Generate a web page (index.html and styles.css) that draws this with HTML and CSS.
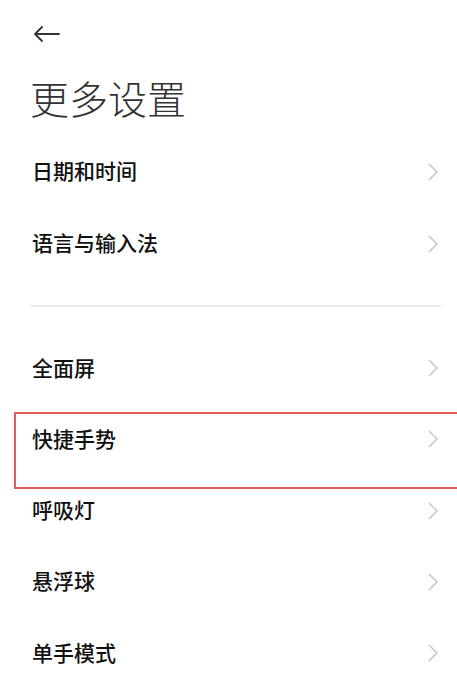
FILE: index.html
```html
<!DOCTYPE html>
<html lang="zh-CN">
<head>
<meta charset="utf-8">
<title>更多设置</title>
<link rel="stylesheet" href="styles.css">
</head>
<body>
<div class="page">
  <div class="topbar">
    <svg class="back" width="27" height="16" viewBox="0 0 27 16">
      <path d="M26 8H2M9 1L2 8l7 7" fill="none" stroke="#333" stroke-width="1.8" stroke-linecap="round" stroke-linejoin="round"/>
    </svg>
  </div>
  <h1 class="title">更多设置</h1>
  <div class="group">
    <div class="row"><span class="label">日期和时间</span><svg class="chev" width="10" height="18" viewBox="0 0 10 18"><polyline points="1,1 9,9 1,17" fill="none" stroke="#c2c2c2" stroke-width="1.4"/></svg></div>
    <div class="row"><span class="label">语言与输入法</span><svg class="chev" width="10" height="18" viewBox="0 0 10 18"><polyline points="1,1 9,9 1,17" fill="none" stroke="#c2c2c2" stroke-width="1.4"/></svg></div>
  </div>
  <div class="sep"><div class="line"></div></div>
  <div class="group group2">
    <div class="row r2"><span class="label">全面屏</span><svg class="chev" width="10" height="18" viewBox="0 0 10 18"><polyline points="1,1 9,9 1,17" fill="none" stroke="#c2c2c2" stroke-width="1.4"/></svg></div>
    <div class="row r2"><span class="label">快捷手势</span><svg class="chev" width="10" height="18" viewBox="0 0 10 18"><polyline points="1,1 9,9 1,17" fill="none" stroke="#c2c2c2" stroke-width="1.4"/></svg></div>
    <div class="row r2"><span class="label">呼吸灯</span><svg class="chev" width="10" height="18" viewBox="0 0 10 18"><polyline points="1,1 9,9 1,17" fill="none" stroke="#c2c2c2" stroke-width="1.4"/></svg></div>
    <div class="row r2"><span class="label">悬浮球</span><svg class="chev" width="10" height="18" viewBox="0 0 10 18"><polyline points="1,1 9,9 1,17" fill="none" stroke="#c2c2c2" stroke-width="1.4"/></svg></div>
    <div class="row r2"><span class="label">单手模式</span><svg class="chev" width="10" height="18" viewBox="0 0 10 18"><polyline points="1,1 9,9 1,17" fill="none" stroke="#c2c2c2" stroke-width="1.4"/></svg></div>
  </div>
  <div class="highlight"></div>
</div>
</body>
</html>
```
FILE: styles.css
```css
html, body {
  margin: 0;
  padding: 0;
  background: #fff;
}
body {
  font-family: "Noto Sans CJK SC", "Noto Sans", sans-serif;
  color: #111;
  width: 457px;
  height: 698px;
  overflow: hidden;
}
.page {
  position: relative;
  width: 457px;
  height: 698px;
}
.topbar {
  height: 68px;
  display: flex;
  align-items: center;
  padding-left: 33px;
}
.back {
  display: block;
}
.title {
  margin: 0;
  height: 68px;
  box-sizing: border-box;
  display: flex;
  align-items: center;
  padding-left: 30px;
  padding-bottom: 10px;
  font-size: 39px;
  font-weight: 300;
  color: #333;
  letter-spacing: 0;
}
.group {
  display: flex;
  flex-direction: column;
}
.row {
  height: 72px;
  box-sizing: border-box;
  display: flex;
  align-items: center;
  justify-content: space-between;
  padding-left: 32px;
  padding-right: 19px;
  padding-bottom: 3px;
}
.row.r2 {
  height: 71.25px;
}
.chev {
  margin-top: 2px;
}
.label {
  font-size: 21px;
  font-weight: 500;
  color: #111;
  line-height: 1;
}
.chev {
  display: block;
}
.sep {
  height: 53px;
  padding-left: 30px;
  padding-right: 16px;
  padding-top: 25px;
  box-sizing: border-box;
}
.line {
  height: 1.5px;
  background: #ececec;
}
.highlight {
  position: absolute;
  left: 14px;
  top: 412px;
  width: 460px;
  height: 77px;
  border: 2px solid #e35a5a;
  box-sizing: border-box;
}
```
